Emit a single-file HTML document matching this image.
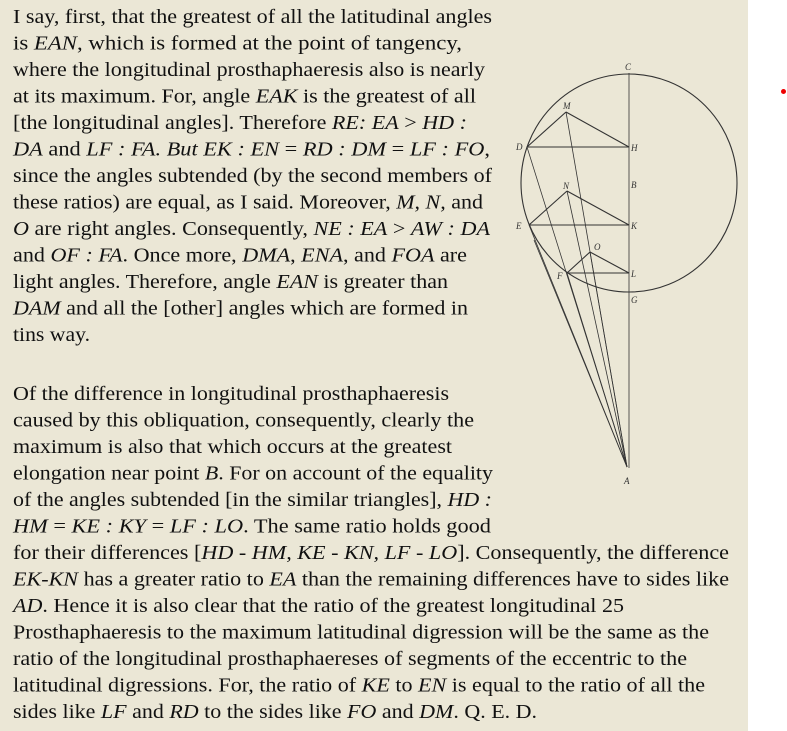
<!DOCTYPE html>
<html><head><meta charset="utf-8"><style>
html,body{margin:0;padding:0;background:#fff;width:787px;height:731px;overflow:hidden}
#bg{position:absolute;left:0;top:0;width:748px;height:731px;background:#ebe7d6}
#dot{position:absolute;left:781px;top:89px;width:5px;height:5px;border-radius:50%;background:#e00}
svg{position:absolute;left:0;top:0}
.i{font-style:italic}
text{font-family:"Liberation Serif","Noto Serif CJK SC","DejaVu Serif",serif}
</style></head><body>
<div id="bg"></div>
<div id="dot"></div>
<svg width="787" height="731">
<g font-style="italic" font-size="9" fill="#333">
<g stroke="#333" fill="none" stroke-width="1.1">
<ellipse cx="629" cy="183" rx="108" ry="109"/>
<line x1="629" y1="73" x2="629" y2="468" stroke-width="0.8"/>
<line x1="527" y1="147" x2="629" y2="147"/>
<line x1="527" y1="147" x2="566" y2="112"/>
<line x1="566" y1="112" x2="629" y2="147"/>
<line x1="529" y1="225" x2="629" y2="225"/>
<line x1="529" y1="225" x2="567" y2="191"/>
<line x1="567" y1="191" x2="629" y2="225"/>
<line x1="567" y1="273" x2="629" y2="273"/>
<line x1="567" y1="273" x2="590" y2="252"/>
<line x1="590" y1="252" x2="629" y2="273"/>
<g stroke-width="0.8">
<line x1="527" y1="147" x2="627" y2="467"/>
<line x1="529" y1="225" x2="627" y2="467"/>
<line x1="567" y1="273" x2="627" y2="467"/>
<line x1="566" y1="112" x2="627" y2="467"/>
<line x1="567" y1="191" x2="627" y2="467"/>
<line x1="590" y1="252" x2="627" y2="467"/>
<line x1="534" y1="240" x2="627" y2="467"/>
</g></g>
<text x="625" y="70">C</text><text x="563" y="109">M</text><text x="516" y="150">D</text>
<text x="631" y="151">H</text><text x="631" y="188">B</text><text x="563" y="189">N</text>
<text x="516" y="229">E</text><text x="631" y="229">K</text><text x="594" y="250">O</text>
<text x="557" y="279">F</text><text x="631" y="277">L</text><text x="631" y="303">G</text>
<text x="624" y="484">A</text>
</g>
<g font-size="20" fill="#111">
<text x="13" y="23" textLength="479" lengthAdjust="spacingAndGlyphs">I say, first, that the greatest of all the latitudinal angles</text>
<text x="13" y="49.5" textLength="449" lengthAdjust="spacingAndGlyphs">is <tspan class="i">EAN</tspan>, which is formed at the point of tangency,</text>
<text x="13" y="76" textLength="472" lengthAdjust="spacingAndGlyphs">where the longitudinal prosthaphaeresis also is nearly</text>
<text x="13" y="102.5" textLength="463" lengthAdjust="spacingAndGlyphs">at its maximum. For, angle <tspan class="i">EAK</tspan> is the greatest of all</text>
<text x="13" y="129" textLength="454" lengthAdjust="spacingAndGlyphs">[the longitudinal angles]. Therefore <tspan class="i">RE: EA</tspan> &gt; <tspan class="i">HD :</tspan></text>
<text x="13" y="155.5" textLength="477" lengthAdjust="spacingAndGlyphs"><tspan class="i">DA</tspan> and <tspan class="i">LF : FA. But EK : EN</tspan> = <tspan class="i">RD : DM</tspan> = <tspan class="i">LF : FO</tspan>,</text>
<text x="13" y="182" textLength="479" lengthAdjust="spacingAndGlyphs">since the angles subtended (by the second members of</text>
<text x="13" y="208.5" textLength="470" lengthAdjust="spacingAndGlyphs">these ratios) are equal, as I said. Moreover, <tspan class="i">M, N,</tspan> and</text>
<text x="13" y="235" textLength="477" lengthAdjust="spacingAndGlyphs"><tspan class="i">O</tspan> are right angles. Consequently, <tspan class="i">NE : EA</tspan> &gt; <tspan class="i">AW : DA</tspan></text>
<text x="13" y="261.5" textLength="454" lengthAdjust="spacingAndGlyphs">and <tspan class="i">OF : FA</tspan>. Once more, <tspan class="i">DMA</tspan>, <tspan class="i">ENA</tspan>, and <tspan class="i">FOA</tspan> are</text>
<text x="13" y="288" textLength="435" lengthAdjust="spacingAndGlyphs">light angles. Therefore, angle <tspan class="i">EAN</tspan> is greater than</text>
<text x="13" y="314.5" textLength="455" lengthAdjust="spacingAndGlyphs"><tspan class="i">DAM</tspan> and all the [other] angles which are formed in</text>
<text x="13" y="341" textLength="77" lengthAdjust="spacingAndGlyphs">tins way.</text>
<text x="13" y="400" textLength="436" lengthAdjust="spacingAndGlyphs">Of the difference in longitudinal prosthaphaeresis</text>
<text x="13" y="426.5" textLength="461" lengthAdjust="spacingAndGlyphs">caused by this obliquation, consequently, clearly the</text>
<text x="13" y="453" textLength="439" lengthAdjust="spacingAndGlyphs">maximum is also that which occurs at the greatest</text>
<text x="13" y="479.5" textLength="480" lengthAdjust="spacingAndGlyphs">elongation near point <tspan class="i">B</tspan>. For on account of the equality</text>
<text x="13" y="506" textLength="479" lengthAdjust="spacingAndGlyphs">of the angles subtended [in the similar triangles], <tspan class="i">HD :</tspan></text>
<text x="13" y="532.5" textLength="478" lengthAdjust="spacingAndGlyphs"><tspan class="i">HM</tspan> = <tspan class="i">KE : KY</tspan> = <tspan class="i">LF : LO</tspan>. The same ratio holds good</text>
<text x="13" y="559" textLength="716" lengthAdjust="spacingAndGlyphs">for their differences [<tspan class="i">HD - HM, KE - KN, LF - LO</tspan>]. Consequently, the difference</text>
<text x="13" y="585.5" textLength="716" lengthAdjust="spacingAndGlyphs"><tspan class="i">EK-KN</tspan> has a greater ratio to <tspan class="i">EA</tspan> than the remaining differences have to sides like</text>
<text x="13" y="612" textLength="611" lengthAdjust="spacingAndGlyphs"><tspan class="i">AD</tspan>. Hence it is also clear that the ratio of the greatest longitudinal 25</text>
<text x="13" y="638.5" textLength="696" lengthAdjust="spacingAndGlyphs">Prosthaphaeresis to the maximum latitudinal digression will be the same as the</text>
<text x="13" y="665" textLength="674" lengthAdjust="spacingAndGlyphs">ratio of the longitudinal prosthaphaereses of segments of the eccentric to the</text>
<text x="13" y="691.5" textLength="692" lengthAdjust="spacingAndGlyphs">latitudinal digressions. For, the ratio of <tspan class="i">KE</tspan> to <tspan class="i">EN</tspan> is equal to the ratio of all the</text>
<text x="13" y="718" textLength="524" lengthAdjust="spacingAndGlyphs">sides like <tspan class="i">LF</tspan> and <tspan class="i">RD</tspan> to the sides like <tspan class="i">FO</tspan> and <tspan class="i">DM</tspan>. Q. E. D.</text>
</g>
</svg>
</body></html>
